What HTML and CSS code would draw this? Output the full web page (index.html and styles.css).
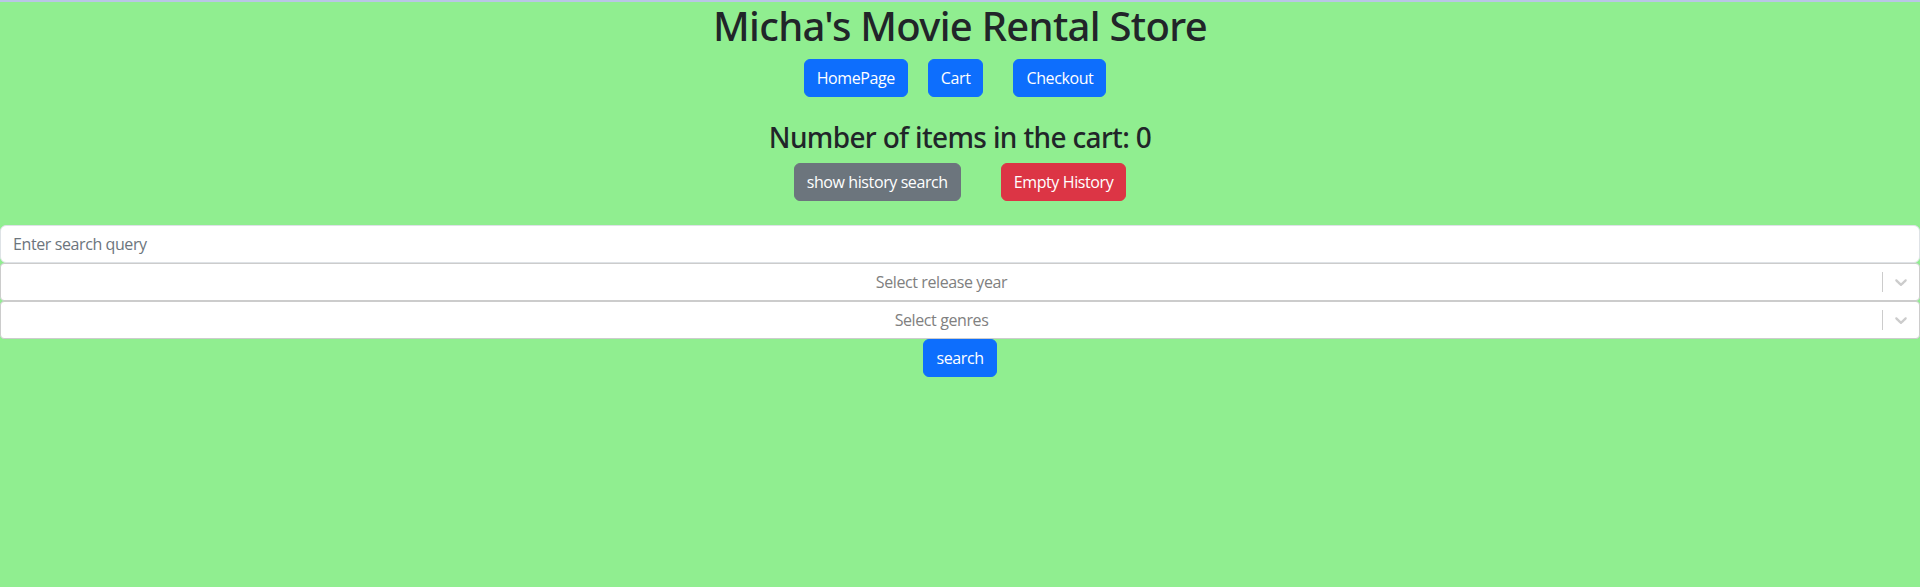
FILE: index.html
```html
<!DOCTYPE html>
<html lang="en">
<head>
<meta charset="utf-8">
<title>Micha's Movie Rental Store</title>
<link rel="stylesheet" href="styles.css">
</head>
<body>
<div class="app">
  <h1 class="title">Micha's Movie Rental Store</h1>
  <nav class="nav">
    <button class="btn btn-primary nav-home">HomePage</button>
    <button class="btn btn-primary nav-cart">Cart</button>
    <button class="btn btn-primary nav-checkout">Checkout</button>
  </nav>
  <h3 class="count">Number of items in the cart: 0</h3>
  <div class="history">
    <button class="btn btn-secondary">show history search</button>
    <button class="btn btn-danger">Empty History</button>
  </div>
  <form class="search">
    <input class="form-control" type="text" placeholder="Enter search query">
    <div class="select">
      <div class="select-value">Select release year</div>
      <div class="select-indicators">
        <span class="select-sep"></span>
        <span class="select-arrow"><svg viewBox="0 0 20 20" width="20" height="20"><path fill="currentColor" d="M4.516 7.548c0.436-0.446 1.043-0.481 1.576 0l3.908 3.747 3.908-3.747c0.533-0.481 1.141-0.446 1.574 0 0.436 0.445 0.408 1.197 0 1.615-0.406 0.418-4.695 4.502-4.695 4.502-0.217 0.223-0.502 0.335-0.787 0.335s-0.57-0.112-0.789-0.335c0 0-4.287-4.084-4.695-4.502s-0.436-1.170 0-1.615z"/></svg></span>
      </div>
    </div>
    <div class="select">
      <div class="select-value">Select genres</div>
      <div class="select-indicators">
        <span class="select-sep"></span>
        <span class="select-arrow"><svg viewBox="0 0 20 20" width="20" height="20"><path fill="currentColor" d="M4.516 7.548c0.436-0.446 1.043-0.481 1.576 0l3.908 3.747 3.908-3.747c0.533-0.481 1.141-0.446 1.574 0 0.436 0.445 0.408 1.197 0 1.615-0.406 0.418-4.695 4.502-4.695 4.502-0.217 0.223-0.502 0.335-0.787 0.335s-0.57-0.112-0.789-0.335c0 0-4.287-4.084-4.695-4.502s-0.436-1.170 0-1.615z"/></svg></span>
      </div>
    </div>
    <div class="search-actions">
      <button type="button" class="btn btn-primary">search</button>
    </div>
  </form>
</div>
</body>
</html>
```
FILE: styles.css
```css
* { box-sizing: border-box; }
html, body { margin: 0; padding: 0; }
body {
  background: #90ee90;
  font-family: "Open Sans", "Noto Sans", sans-serif;
  color: #212529;
  font-size: 16px;
  line-height: 1.5;
  letter-spacing: -0.4px;
  min-height: 587px;
  border-top: 2px solid #b9c6e6;
}
.app { text-align: center; }
.title {
  margin: 0 0 9px;
  font-family: "Noto Sans", "Open Sans", sans-serif;
  font-size: 40px;
  font-weight: 500;
  line-height: 1.2;
  letter-spacing: -0.7px;
}
.nav { display: flex; justify-content: center; height: 38px; padding-right: 10px; }
.nav-cart { margin-left: 20px; }
.nav-checkout { margin-left: 30px; }
.btn {
  font-family: inherit;
  font-size: 16px;
  line-height: 1.5;
  letter-spacing: -0.4px;
  padding: 6px 12px;
  border: 1px solid transparent;
  border-radius: 6px;
  color: #fff;
  cursor: pointer;
}
.btn-primary { background: #0d6efd; border-color: #0d6efd; }
.btn-secondary { background: #6c757d; border-color: #6c757d; }
.btn-danger { background: #dc3545; border-color: #dc3545; }
.count {
  margin: 24px 0 8px;
  font-family: "Noto Sans", "Open Sans", sans-serif;
  font-size: 28px;
  font-weight: 500;
  line-height: 1.2;
  letter-spacing: -0.65px;
}
.history { display: flex; justify-content: center; gap: 40px; }
.search { margin-top: 24px; display: flex; flex-direction: column; }
.form-control {
  display: block;
  width: 100%;
  height: 38px;
  padding: 6px 12px;
  font-family: inherit;
  font-size: 16px;
  line-height: 1.5;
  letter-spacing: -0.4px;
  color: #212529;
  background: #fff;
  border: 1px solid #dee2e6;
  border-radius: 6px;
  text-align: left;
}
.form-control::placeholder { color: #6c757d; }
.select {
  display: flex;
  align-items: center;
  height: 38px;
  background: #fff;
  border: 1px solid #ccc;
  border-radius: 4px;
}
.select-value {
  flex: 1;
  padding: 2px 8px;
  color: #808080;
  text-align: center;
}
.select-indicators { display: flex; align-items: stretch; align-self: stretch; }
.select-sep {
  width: 1px;
  margin: 8px 0;
  background: #ccc;
}
.select-arrow {
  display: flex;
  align-items: center;
  padding: 8px;
  color: #ccc;
}
.select-arrow svg { display: block; }
.search-actions { display: flex; justify-content: center; }
```
